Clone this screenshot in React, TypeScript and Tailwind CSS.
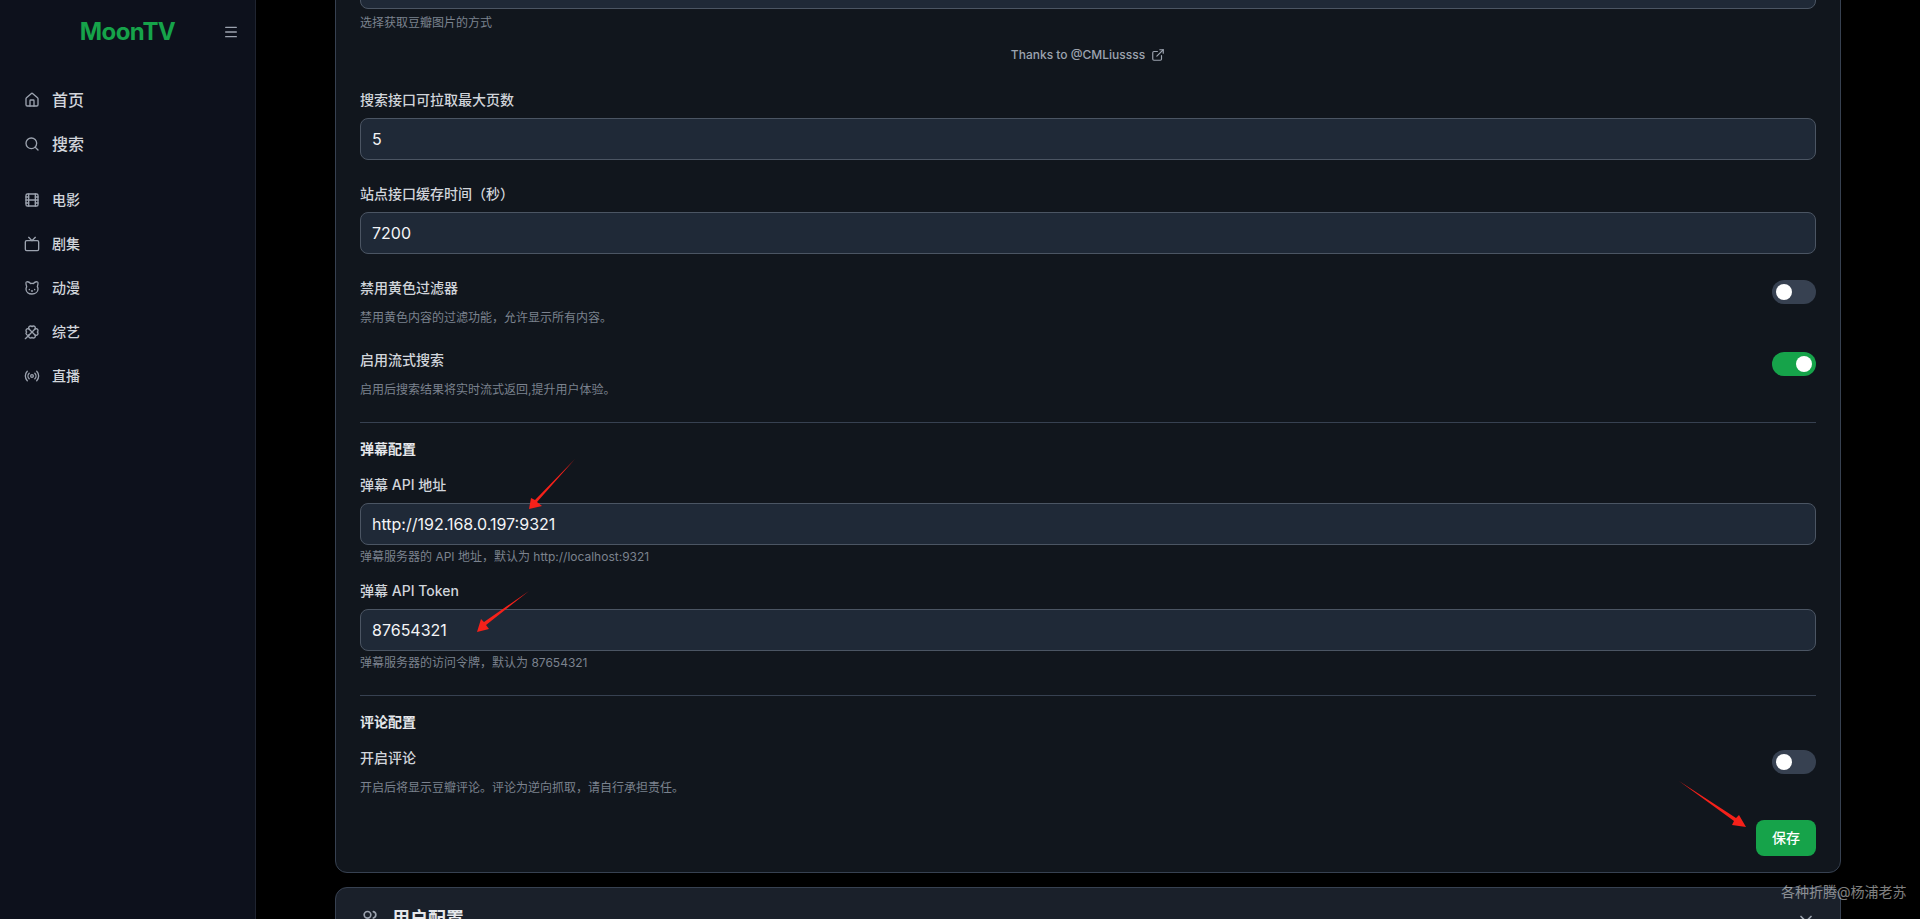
import { Cat, ChevronDown, Clover, ExternalLink, Film, Home, Menu, Radio, Search, Tv, Users } from "lucide-react";
import type { ComponentType, ReactNode } from "react";

const FONT = "font-['Inter','Noto_Sans_CJK_SC',sans-serif]";

type NavItem = { label: string; icon: ComponentType<{ className?: string }> };

const primaryNav: NavItem[] = [
  { label: "首页", icon: Home },
  { label: "搜索", icon: Search },
];

const categoryNav: NavItem[] = [
  { label: "电影", icon: Film },
  { label: "剧集", icon: Tv },
  { label: "动漫", icon: Cat },
  { label: "综艺", icon: Clover },
  { label: "直播", icon: Radio },
];

function NavRow({ item, large }: { item: NavItem; large?: boolean }) {
  const Icon = item.icon;
  return (
    <div className={`flex h-11 items-center gap-3 px-6 font-medium text-[#d1d5db] ${large ? "text-base" : "text-sm"}`}>
      <Icon className="h-4 w-4 text-[#9ca3af]" />
      <span>{item.label}</span>
    </div>
  );
}

function Sidebar() {
  return (
    <aside className="h-full w-64 shrink-0 border-r border-[#1f2430] bg-[#0d111c]">
      <div className="relative flex h-16 items-center justify-center">
        <span className="text-2xl font-bold tracking-tight text-[#16a34a]">MoonTV</span>
        <Menu className="absolute left-[223px] top-6 h-4 w-4 text-[#9ca3af]" />
      </div>
      <nav className="pt-3.5">
        {primaryNav.map((item) => (
          <NavRow key={item.label} item={item} large />
        ))}
        <div className="h-3" />
        {categoryNav.map((item) => (
          <NavRow key={item.label} item={item} />
        ))}
      </nav>
    </aside>
  );
}

function Label({ children }: { children: ReactNode }) {
  return <label className="mb-2 block h-5 text-sm leading-5 font-medium text-[#d1d5db]">{children}</label>;
}

function Hint({ children }: { children: ReactNode }) {
  return <p className="text-xs leading-4 text-[#7b828e]">{children}</p>;
}

function Field({ value }: { value: string }) {
  return (
    <div className="flex h-[42px] items-center rounded-lg border border-[#4b5563] bg-[#1f2937] px-[11px] text-base text-[#f3f4f6]">
      {value}
    </div>
  );
}

function Toggle({ on }: { on?: boolean }) {
  return (
    <div className={`flex h-6 w-11 items-center rounded-full px-1 ${on ? "justify-end bg-[#16a34a]" : "bg-[#374151]"}`}>
      <span className="h-4 w-4 rounded-full bg-white" />
    </div>
  );
}

function ToggleRow({ title, hint, on }: { title: string; hint: string; on?: boolean }) {
  return (
    <div className="flex items-start justify-between">
      <div>
        <div className="mb-3 h-5 text-sm leading-5 font-medium text-[#d1d5db]">{title}</div>
        <Hint>{hint}</Hint>
      </div>
      <div className="pt-0.5">
        <Toggle on={on} />
      </div>
    </div>
  );
}

function SectionTitle({ children }: { children: ReactNode }) {
  return <h3 className="h-5 text-sm leading-5 font-semibold text-[#e5e7eb]">{children}</h3>;
}

function Arrows() {
  return (
    <svg className="pointer-events-none absolute left-0 top-0" width="1920" height="919" viewBox="0 0 1920 919">
      <g fill="#f5211a">
        <polygon points="575,459 537,502 542,506 529,509 531,498 535,500" />
        <polygon points="529,591 486,625 489,629 477,632 481,619 484,622" />
        <polygon points="1679,781 1736,818 1739,815 1746,827 1732,825 1734,821" />
      </g>
    </svg>
  );
}

export default function App() {
  return (
    <div className={`relative flex h-screen overflow-hidden bg-black ${FONT}`}>
      <Sidebar />
      <main className="min-w-0 flex-1 pl-[79px] pr-[79px]">
        <section className="-mt-[34px] rounded-xl border border-[#374151] bg-[#11161d] px-6 pb-4">
          <Field value="" />
          <div className="mt-1.5">
            <Hint>选择获取豆瓣图片的方式</Hint>
          </div>
          <div className="mt-4 flex h-4 items-center justify-center gap-1.5 text-xs font-medium text-[#9ca3af]">
            <span>Thanks to @CMLiussss</span>
            <ExternalLink className="h-3.5 w-3.5" />
          </div>
          <div className="mt-[27px]">
            <Label>搜索接口可拉取最大页数</Label>
            <Field value="5" />
          </div>
          <div className="mt-6">
            <Label>站点接口缓存时间（秒）</Label>
            <Field value="7200" />
          </div>
          <div className="mt-6">
            <ToggleRow title="禁用黄色过滤器" hint="禁用黄色内容的过滤功能，允许显示所有内容。" />
          </div>
          <div className="mt-6">
            <ToggleRow title="启用流式搜索" hint="启用后搜索结果将实时流式返回,提升用户体验。" on />
          </div>
          <div className="mt-6 border-t border-[#374151] pt-4">
            <SectionTitle>弹幕配置</SectionTitle>
            <div className="mt-4">
              <Label>弹幕 API 地址</Label>
              <Field value="http://192.168.0.197:9321" />
              <div className="mt-1">
                <Hint>弹幕服务器的 API 地址，默认为 http://localhost:9321</Hint>
              </div>
            </div>
            <div className="mt-4">
              <Label>弹幕 API Token</Label>
              <Field value="87654321" />
              <div className="mt-1">
                <Hint>弹幕服务器的访问令牌，默认为 87654321</Hint>
              </div>
            </div>
          </div>
          <div className="mt-6 border-t border-[#374151] pt-4">
            <SectionTitle>评论配置</SectionTitle>
            <div className="mt-4">
              <ToggleRow title="开启评论" hint="开启后将显示豆瓣评论。评论为逆向抓取，请自行承担责任。" />
            </div>
          </div>
          <div className="mt-6 flex justify-end">
            <button className="h-9 w-[60px] rounded-lg bg-[#16a34a] text-sm font-medium text-white">保存</button>
          </div>
        </section>
        <section className="mt-3.5 rounded-xl border border-[#374151] bg-[#1a202a] px-6">
          <div className="flex h-[62px] items-center justify-between">
            <div className="flex items-center gap-3">
              <Users className="h-5 w-5 text-[#9ca3af]" />
              <span className="text-lg font-semibold text-[#e5e7eb]">用户配置</span>
            </div>
            <ChevronDown className="h-5 w-5 text-[#9ca3af]" />
          </div>
        </section>
      </main>
      <Arrows />
      <div className="pointer-events-none absolute left-[1781px] top-[884px] text-sm leading-4 text-white/50">各种折腾@杨浦老苏</div>
    </div>
  );
}
